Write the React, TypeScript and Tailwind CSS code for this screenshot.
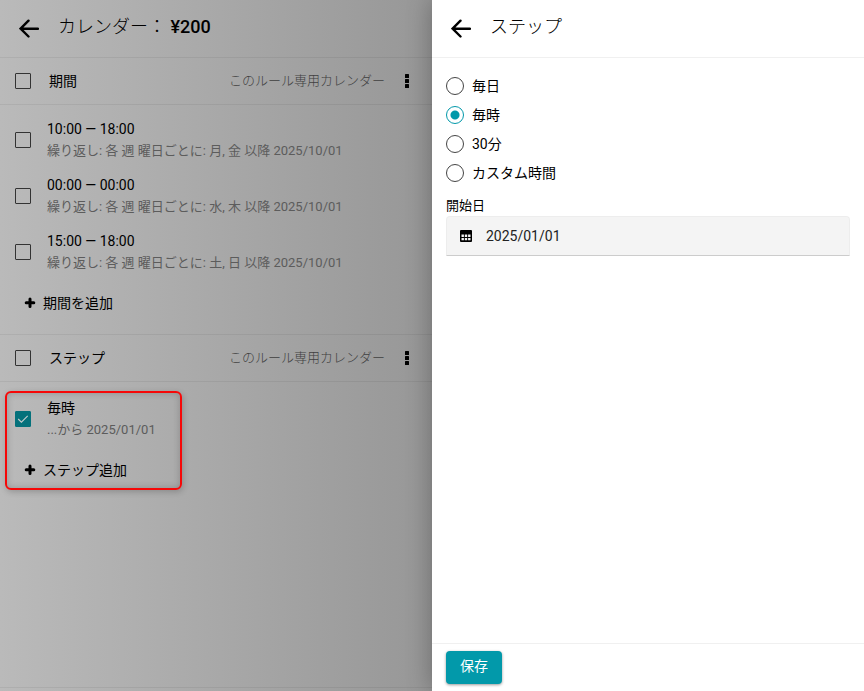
import { useState } from "react";

const periods = [
  { id: "p1", time: "10:00 — 18:00", rule: "繰り返し: 各 週 曜日ごとに: 月, 金 以降 2025/10/01" },
  { id: "p2", time: "00:00 — 00:00", rule: "繰り返し: 各 週 曜日ごとに: 水, 木 以降 2025/10/01" },
  { id: "p3", time: "15:00 — 18:00", rule: "繰り返し: 各 週 曜日ごとに: 土, 日 以降 2025/10/01" },
];

const steps = ["毎日", "毎時", "30分", "カスタム時間"];

function BackArrow() {
  return (
    <svg className="h-5 w-5" viewBox="0 0 20 20" fill="none" stroke="currentColor" strokeWidth="2.4" strokeLinecap="round">
      <path d="M19 9.7H1.8M9.5 1.7L1.6 9.7l7.9 7.8" strokeLinejoin="miter" />
    </svg>
  );
}

function Plus() {
  return (
    <svg className="h-3 w-3" viewBox="0 0 12 12" stroke="currentColor" strokeWidth="3" strokeLinecap="round">
      <path d="M6 2v7.6M2.2 5.8h7.6" />
    </svg>
  );
}

function Dots() {
  return (
    <svg className="h-[15px] w-1" viewBox="0 0 4 15" fill="currentColor">
      <rect width="4" height="4" rx="0.5" />
      <rect y="5" width="4" height="4" rx="0.5" />
      <rect y="10" width="4" height="4" rx="0.5" />
    </svg>
  );
}

function CheckBox({ id, checked = false }: { id: string; checked?: boolean }) {
  return (
    <span className="relative h-4 w-4 shrink-0">
      <input
        id={id}
        type="checkbox"
        defaultChecked={checked}
        className="peer block h-4 w-4 appearance-none rounded-[1px] border border-[#333] checked:border-[#04717b] checked:bg-[#04717b]"
      />
      <svg
        className="pointer-events-none absolute inset-0 hidden h-4 w-4 peer-checked:block"
        viewBox="0 0 16 16"
        fill="none"
        stroke="#c4cccc"
        strokeWidth="1.1"
      >
        <path d="M3.2 8l3.2 3.2 6.3-6.3" />
      </svg>
    </span>
  );
}

function SectionHead({ id, title }: { id: string; title: string }) {
  return (
    <div className="flex h-[47px] items-center border-b border-black/6 pl-[15px] pr-[23px]">
      <CheckBox id={id} />
      <label htmlFor={id} className="ml-[18px] flex-1 text-sm">{title}</label>
      <span className="text-[13px] font-light text-[#404040]">このルール専用カレンダー</span>
      <button type="button" aria-label="メニュー" className="ml-5">
        <Dots />
      </button>
    </div>
  );
}

function Item({ id, title, note, checked }: { id: string; title: string; note: string; checked?: boolean }) {
  return (
    <div className="flex h-14 items-center pl-[15px]">
      <CheckBox id={id} checked={checked} />
      <label htmlFor={id} className="ml-4 whitespace-nowrap">
        <span className="block text-sm leading-[21px]">{title}</span>
        <span className="block text-[13px] leading-[21px] text-[#5c5c5c]">{note}</span>
      </label>
    </div>
  );
}

function AddButton({ text }: { text: string }) {
  return (
    <button type="button" className="ml-6 flex h-[46px] items-center gap-[7px] text-sm">
      <Plus />
      {text}
    </button>
  );
}

export default function App() {
  const [step, setStep] = useState("毎時");
  return (
    <div className="grid min-h-screen grid-cols-2 bg-white font-['Roboto','Noto_Sans_CJK_JP',sans-serif] text-black">
      <section className="flex flex-col bg-linear-to-r from-[#bababa] to-[#979797]">
        <header className="flex h-[58px] items-center border-b border-black/6 pl-[19px]">
          <button type="button" aria-label="戻る">
            <BackArrow />
          </button>
          <h1 className="ml-[19px] pb-1 text-lg font-light">
            カレンダー： <span className="font-medium">¥200</span>
          </h1>
        </header>
        <SectionHead id="periods" title="期間" />
        <div className="pt-[7px] pb-2">
          {periods.map((p) => (
            <Item key={p.id} id={p.id} title={p.time} note={p.rule} />
          ))}
          <AddButton text="期間を追加" />
        </div>
        <div className="border-t border-black/6">
          <SectionHead id="steps" title="ステップ" />
        </div>
        <div className="relative pt-[9px]">
          <Item id="hourly" title="毎時" note="...から 2025/01/01" checked />
          <AddButton text="ステップ追加" />
          {/* highlight frame */}
          <div className="pointer-events-none absolute top-[9px] left-[5px] h-[99px] w-[177px] rounded-md border-2 border-[#f60808] shadow-[1px_2px_6px_rgba(0,0,0,0.2),inset_0_0_7px_rgba(0,0,0,0.2)]" />
        </div>
        <div className="mt-auto h-1 border-t border-black/6" />
      </section>

      <section className="z-10 flex flex-col bg-white shadow-[0_0_24px_rgba(0,0,0,0.3)]">
        <header className="flex h-[58px] items-center border-b border-[#f0f0f0] pl-[19px]">
          <button type="button" aria-label="戻る">
            <BackArrow />
          </button>
          <h2 className="ml-[19px] pb-1 text-lg font-light">ステップ</h2>
        </header>
        <form className="flex flex-1 flex-col" onSubmit={(e) => e.preventDefault()}>
          <div className="flex-1 px-3.5 pt-[13px]">
            {steps.map((s) => (
              <label key={s} className="flex h-[29px] items-center gap-2 text-sm">
                <input
                  type="radio"
                  name="step"
                  value={s}
                  checked={step === s}
                  onChange={() => setStep(s)}
                  className="h-[18px] w-[18px] appearance-none rounded-full border border-[#444] checked:border-[#0299aa] checked:bg-[radial-gradient(circle,#0299aa_4px,transparent_5px)]"
                />
                {s}
              </label>
            ))}
            <label htmlFor="start" className="mt-[9px] block text-[13px] leading-5">開始日</label>
            <div className="flex h-10 items-center rounded-t-sm border border-b-[#ccc] border-[#ededed] bg-[#f4f4f4] pl-[13px]">
              <svg className="h-3 w-3" viewBox="0 0 12 12">
                <rect width="12" height="12" rx="1" fill="#000" />
                <path
                  d="M1.5 4.5h2.4v2.4H1.5zM4.8 4.5h2.4v2.4H4.8zM8.1 4.5h2.4v2.4H8.1zM1.5 7.9h2.4v2.4H1.5zM4.8 7.9h2.4v2.4H4.8zM8.1 7.9h2.4v2.4H8.1z"
                  fill="#f4f4f4"
                />
              </svg>
              <input
                id="start"
                type="text"
                defaultValue="2025/01/01"
                className="ml-3.5 min-w-0 flex-1 bg-transparent text-sm text-[#222] outline-none"
              />
            </div>
          </div>
          <footer className="border-t border-[#f0f0f0] px-3.5 py-[7px]">
            <button type="submit" className="block h-[33px] rounded bg-[#0299aa] px-3.5 pb-1 text-sm text-white shadow-[0_1px_3px_rgba(0,0,0,0.4)]">
              保存
            </button>
          </footer>
        </form>
      </section>
    </div>
  );
}
